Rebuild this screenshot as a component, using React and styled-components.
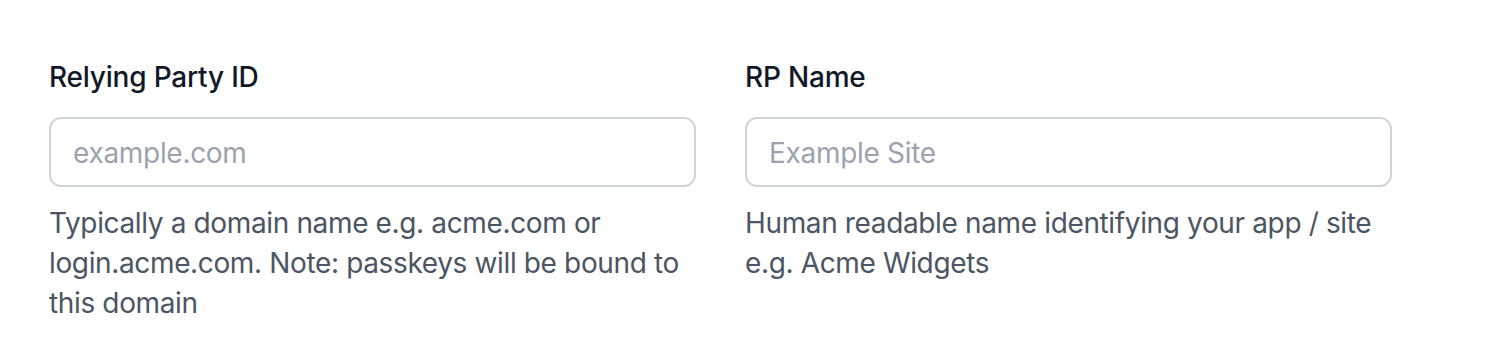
import React from "react";
import styled, { createGlobalStyle } from "styled-components";

const Global = createGlobalStyle`
  * { box-sizing: border-box; }
  html, body { margin: 0; padding: 0; background: #ffffff; }
  body { font-family: Inter, "Noto Sans", "Liberation Sans", sans-serif; -webkit-font-smoothing: antialiased; }
`;

const Page = styled.div`
  padding: 53px 0 0 49px;
`;

const Grid = styled.div`
  display: grid;
  grid-template-columns: 647px 647px;
  column-gap: 49px;
`;

const Field = styled.div`
  display: flex;
  flex-direction: column;
`;

const Label = styled.label`
  font-size: 28px;
  line-height: 48px;
  font-weight: 500;
  letter-spacing: -0.2px;
  color: #111827;
`;

const Input = styled.input`
  margin-top: 16px;
  height: 70px;
  width: 100%;
  border: 2px solid #d1d5db;
  border-radius: 12px;
  padding: 2px 22px 0;
  font-family: inherit;
  font-size: 28px;
  letter-spacing: -0.3px;
  color: #111827;
  background: #fff;
  outline: none;
  &::placeholder { color: #9ca3af; }
`;

const Help = styled.p`
  margin: 16px 0 0;
  font-size: 28px;
  line-height: 40px;
  letter-spacing: -0.36px;
  color: #4b5563;
`;

export default function App() {
  return (
    <>
      <Global />
      <Page>
        <Grid>
          <Field>
            <Label>Relying Party ID</Label>
            <Input placeholder="example.com" />
            <Help>
              Typically a domain name e.g. acme.com or login.acme.com. Note: passkeys will be bound to this domain
            </Help>
          </Field>
          <Field>
            <Label>RP Name</Label>
            <Input placeholder="Example Site" />
            <Help>Human readable name identifying your app / site e.g. Acme Widgets</Help>
          </Field>
        </Grid>
      </Page>
    </>
  );
}
